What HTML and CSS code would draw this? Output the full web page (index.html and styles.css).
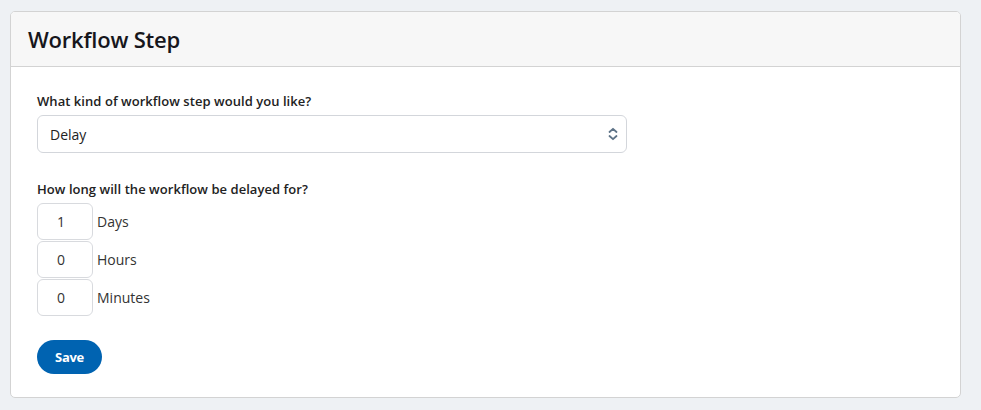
FILE: index.html
```html
<!DOCTYPE html>
<html>
<head>
<meta charset="utf-8">
<link rel="stylesheet" href="styles.css">
</head>
<body>
<div class="card">
  <div class="card-header"><h1 class="title">Workflow Step</h1></div>
  <div class="card-body">
    <label class="label">What kind of workflow step would you like?</label>
    <div class="select">
      <span class="select-value">Delay</span>
      <svg class="chevrons" width="10" height="14" viewBox="0 0 10 14"><path d="M1.5 5 L5 1.8 L8.5 5" fill="none" stroke="#5e7387" stroke-width="1.8" stroke-linecap="round" stroke-linejoin="round"/><path d="M1.5 9 L5 12.2 L8.5 9" fill="none" stroke="#5e7387" stroke-width="1.8" stroke-linecap="round" stroke-linejoin="round"/></svg>
    </div>
    <label class="label label-2">How long will the workflow be delayed for?</label>
    <div class="durations">
      <div class="duration"><div class="num">1</div><span class="unit">Days</span></div>
      <div class="duration"><div class="num">0</div><span class="unit">Hours</span></div>
      <div class="duration"><div class="num">0</div><span class="unit">Minutes</span></div>
    </div>
    <button class="btn">Save</button>
  </div>
</div>
</body>
</html>
```
FILE: styles.css
```css
html, body { margin: 0; padding: 0; }
body {
  background: #eef1f4;
  font-family: "Open Sans", "Liberation Sans", sans-serif;
  color: #222;
  padding: 11px 20px 0 10px;
}
.card {
  width: 949px;
  background: #fff;
  border: 1px solid #d3d3d3;
  border-radius: 5px;
  overflow: hidden;
}
.card-header {
  background: #f7f7f7;
  border-bottom: 1px solid #d3d3d3;
  height: 54px;
  display: flex;
  align-items: center;
  padding-left: 17px;
}
.title {
  margin: 0;
  font-family: "Open Sans", sans-serif;
  font-weight: 600;
  font-size: 22px;
  color: #16161c;
  letter-spacing: -0.2px;
}
.card-body {
  padding: 24px 26px 23px 26px;
  display: flex;
  flex-direction: column;
  align-items: flex-start;
}
.label {
  font-size: 13px;
  font-weight: 600;
  line-height: 20px;
  color: #222;
  margin-bottom: 4px;
  letter-spacing: 0.05px;
}
.select {
  box-sizing: border-box;
  width: 590px;
  height: 38px;
  border: 1px solid #d3d6db;
  border-radius: 6px;
  display: flex;
  align-items: center;
  justify-content: space-between;
  padding: 0 8px 0 12px;
}
.select-value { font-size: 14px; color: #222; }
.label-2 { margin-top: 26px; margin-bottom: 4px; }
.durations { display: flex; flex-direction: column; gap: 1px; }
.duration { display: flex; align-items: center; }
.num {
  box-sizing: border-box;
  width: 56px;
  height: 37px;
  border: 1px solid #d8dade;
  border-radius: 6px;
  display: flex;
  align-items: center;
  justify-content: center;
  padding-right: 8px;
  font-size: 14px;
  color: #333;
}
.unit { font-size: 14px; color: #333; margin-left: 4px; }
.btn {
  margin-top: 24px;
  background: #0063b1;
  color: #fff;
  border: none;
  border-radius: 17px;
  height: 34px;
  width: 65px;
  font-family: "Open Sans", sans-serif;
  font-weight: 700;
  font-size: 13px;
  letter-spacing: -0.3px;
}
```
